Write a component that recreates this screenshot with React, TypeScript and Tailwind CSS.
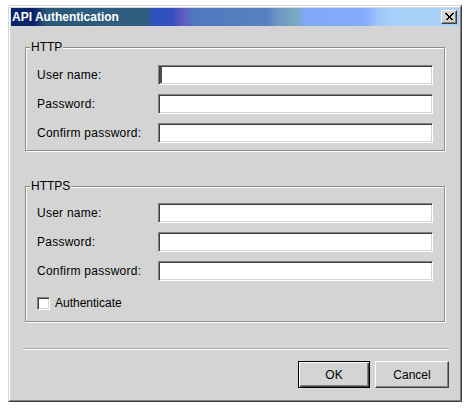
import React from "react";

const sunken =
  "bg-white border border-t-[#808080] border-l-[#808080] border-r-white border-b-white shadow-[inset_1px_1px_0_#404040,inset_-1px_-1px_0_#d4d4d4]";

function TextField({ caret }: { caret?: boolean }) {
  return (
    <div className={`flex h-[20px] w-[275px] items-center ${sunken}`}>
      {caret && <span className="ml-[1px] h-[16px] w-[2px] bg-[#505050]" />}
    </div>
  );
}

function Row({ label, caret }: { label: string; caret?: boolean }) {
  return (
    <div className="flex items-center">
      <span className="w-[121px] text-[12px] leading-[14px] tracking-[0.25px]">{label}</span>
      <TextField caret={caret} />
    </div>
  );
}

function Group({
  title,
  top,
  children,
}: {
  title: string;
  top: string;
  children: React.ReactNode;
}) {
  return (
    <fieldset className="border border-[#8c8c8c] shadow-[inset_1px_1px_0_#fff,1px_1px_0_#fff]">
      <legend className="ml-[4px] bg-[#d4d4d4] px-[1px] text-[12px] leading-[14px]">
        {title}
      </legend>
      <div className={`flex flex-col gap-[9px] pl-[11px] pr-[10px] ${top}`}>
        {children}
      </div>
    </fieldset>
  );
}

export default function App() {
  return (
    <div className="h-[409px] w-[467px] bg-white pl-[8px] pt-[5px] font-['Liberation_Sans',Arial,sans-serif] text-black">
      {/* window frame */}
      <div className="h-[397px] w-[454px] border border-t-[#d4d4d4] border-l-[#d4d4d4] border-r-[#404040] border-b-[#404040] bg-[#d4d4d4]">
        <div className="flex h-full flex-col border border-t-white border-l-white border-r-[#808080] border-b-[#808080] p-[1px]">
          {/* title bar */}
          <div className="flex h-[18px] items-center justify-between bg-[linear-gradient(to_right,#0a246a_0%,#0a246a_5%,#2a5878_8%,#2f5e80_30%,#2f4fc0_32%,#3450c0_36%,#6058c0_38%,#5078c0_41%,#5880c0_57%,#7098c8_60%,#78a8b8_63%,#80a8f8_66%,#84acff_79%,#a0c4f8_82%,#a8d0f8_85%,#a8d0f8_100%)] pl-[1px] pr-[2px]">
            <span className="text-[12px] leading-[14px] font-bold text-white">
              API Authentication
            </span>
            <div className="flex h-[14px] w-[16px] items-center justify-center border border-t-white border-l-white border-r-[#404040] border-b-[#404040] bg-[#d4d4d4] shadow-[inset_-1px_-1px_0_#808080]">
              <svg width="9" height="8" viewBox="0 0 9 8" className="-mt-[1px]">
                <path
                  d="M0.5 0.5 L7.5 7.5 M1.5 0.5 L8.5 7.5 M7.5 0.5 L0.5 7.5 M8.5 0.5 L1.5 7.5"
                  stroke="#000"
                  strokeWidth="1"
                  shapeRendering="crispEdges"
                />
              </svg>
            </div>
          </div>

          {/* content */}
          <div className="flex flex-col px-[14px] pt-[14px]">
            <Group title="HTTP" top="pt-[11px] pb-[7px]">
              <Row label="User name:" caret />
              <Row label="Password:" />
              <Row label="Confirm password:" />
            </Group>

            <div className="mt-[28px]">
              <Group title="HTTPS" top="pt-[10px] pb-[11px]">
                <Row label="User name:" />
                <Row label="Password:" />
                <Row label="Confirm password:" />
                <label className="mt-[6px] flex items-center gap-[5px]">
                  <span className={`h-[13px] w-[13px] ${sunken}`} />
                  <span className="text-[12px] leading-[14px]">Authenticate</span>
                </label>
              </Group>
            </div>
          </div>

          {/* separator */}
          <div className="ml-[12px] mr-[10px] mt-[26px] h-[2px] border-t border-t-[#a8a8a8] border-b border-b-white" />

          {/* buttons */}
          <div className="mt-[11px] flex justify-end gap-[5px] pr-[10px]">
            <button className="h-[27px] w-[72px] border border-black bg-[#d4d4d4] text-[12px] shadow-[inset_1px_1px_0_#fff,inset_-1px_-1px_0_#404040,inset_-2px_-2px_0_#808080]">
              OK
            </button>
            <button className="h-[27px] w-[74px] border border-t-white border-l-white border-r-[#404040] border-b-[#404040] bg-[#d4d4d4] text-[12px] shadow-[inset_-1px_-1px_0_#808080]">
              Cancel
            </button>
          </div>
        </div>
      </div>
    </div>
  );
}
